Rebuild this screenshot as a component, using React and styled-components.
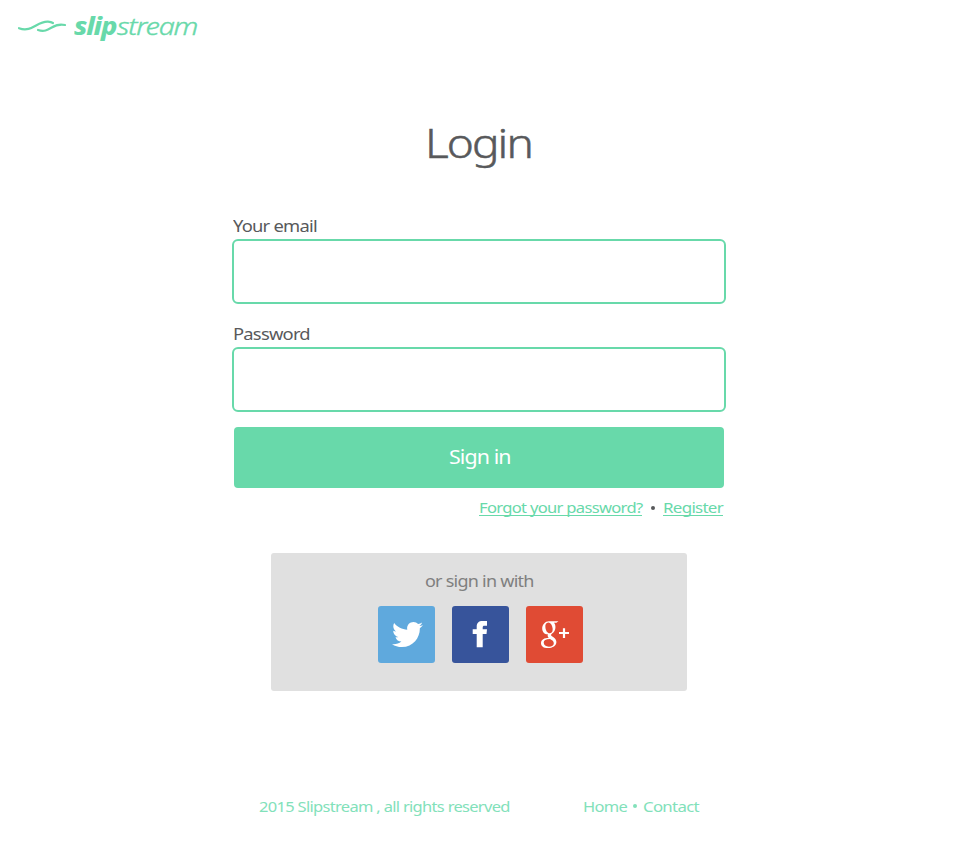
import React from "react";
import styled, { createGlobalStyle } from "styled-components";
import { FaTwitter } from "react-icons/fa";

const green = "#68d9aa";

const GlobalStyle = createGlobalStyle`
  * { box-sizing: border-box; }
  body { margin: 0; background: #fff; font-family: "Noto Sans", "Open Sans", sans-serif; color: #58595b; }
`;

const Page = styled.div`
  width: 960px;
  height: 850px;
  overflow: hidden;
  display: flex;
  flex-direction: column;
`;

const Header = styled.header`
  height: 54px;
  padding-left: 17px;
  display: flex;
  align-items: center;
  color: ${green};
`;

const Waves = styled.svg`
  width: 50px;
  height: 14px;
  flex: none;
`;

/* Wide, tightly set lettering: each text is stretched from one edge. */
const Stretch = styled.span`
  display: inline-block;
  white-space: nowrap;
  letter-spacing: -0.042em;
  transform: scaleX(${(p) => p.$x || 1});
  transform-origin: ${(p) => p.$from || "left"} center;
`;

const Brand = styled.div`
  display: flex;
  height: 34px;
  margin: -3px 0 0 7px;
  font-size: 24.5px;
  line-height: 34px;
  font-style: italic;
`;

const BrandPart = styled.span`
  width: ${(p) => p.$w}px;
  font-weight: ${(p) => p.$weight};
  -webkit-text-stroke: ${(p) => p.$stroke || 0}px ${green};
`;

const Title = styled.h1`
  margin: 61px 0 0;
  padding-right: 3px;
  height: 57px;
  text-align: center;
  font-size: 40px;
  line-height: 56px;
  font-weight: 300;
  -webkit-text-stroke: 0.5px #58595b;
`;

const Form = styled.form`
  width: 495px;
  margin: 43px 0 0 232px;
  display: flex;
  flex-direction: column;
`;

const Label = styled.label`
  height: 24px;
  padding-left: 1px;
  font-size: 17px;
  line-height: 22px;
`;

const Input = styled.input`
  width: 494px;
  height: 65px;
  margin-bottom: 19px;
  border: 2px solid ${green};
  border-radius: 6px;
  background: #fff;
  outline: none;
`;

const Submit = styled.button`
  width: 490px;
  height: 61px;
  margin: -4px 0 0 2px;
  border: 0;
  border-radius: 4px;
  background: ${green};
  color: #fff;
  font: 400 20px/56px "Noto Sans", sans-serif;
  padding: 0 0 2px 2px;
`;

const Links = styled.nav`
  width: 491px;
  height: 28px;
  margin: 6px 0 0;
  display: flex;
  justify-content: flex-end;
  align-items: flex-start;
  color: ${green};
  font-size: 15px;
`;

const Underlined = styled.a`
  width: ${(p) => p.$w}px;
  height: 22px;
  line-height: 26px;
  white-space: nowrap;
  border-bottom: 1px solid ${green};
`;

const Dot = styled.i`
  width: 4px;
  height: 4px;
  margin: ${(p) => p.$m};
  border-radius: 50%;
  background: ${(p) => p.$c};
`;

const Social = styled.section`
  width: 416px;
  height: 138px;
  margin: 31px 0 0 271px;
  padding-top: 17px;
  border-radius: 3px;
  background: #e0e0e0;
`;

const SocialTitle = styled.div`
  height: 22px;
  font-size: 17px;
  line-height: 22px;
  text-align: center;
  color: #7f7f7f;
`;

const Tiles = styled.div`
  display: flex;
  gap: 17.5px;
  margin: 14px 0 0 107px;
`;

const Tile = styled.a`
  width: 56.5px;
  height: 56.5px;
  border-radius: 3px;
  background: ${(p) => p.$c};
  color: #fff;
  display: flex;
`;

const Bird = styled(FaTwitter)`
  width: 31px;
  height: 31px;
  margin: 13px 0 0 14px;
`;

const Mark = styled.svg`
  width: 57px;
  height: 57px;
  flex: none;
`;

const Footer = styled.footer`
  display: flex;
  margin: 104px 0 0 259px;
  height: 22px;
  align-items: center;
  color: #82e1ba;
  font-size: 15px;
  line-height: 22px;
`;

const FooterItem = styled.span`
  width: ${(p) => p.$w}px;
  white-space: nowrap;
`;

export default function App() {
  return (
    <Page>
      <GlobalStyle />
      <Header>
        <Waves viewBox="0 0 50 14" fill="none" stroke="currentColor" strokeWidth="2.2" strokeLinecap="round">
          <path d="M2 8.2C15 13 20 1 31 1.6Q34 1.8 36 3" />
          <path d="M21 10C33 14 35 2 48 5" />
        </Waves>
        <Brand>
          <BrandPart $w={42.5} $weight={800}><Stretch $x={1.12}>slip</Stretch></BrandPart>
          <BrandPart $w={80} $weight={300} $stroke={0.4}><Stretch $x={1.18}>stream</Stretch></BrandPart>
        </Brand>
      </Header>
      <Title><Stretch $x={1.15} $from="center">Login</Stretch></Title>
      <Form>
        <Label><Stretch $x={1.08}>Your email</Stretch></Label>
        <Input type="email" />
        <Label><Stretch $x={1.08}>Password</Stretch></Label>
        <Input type="password" />
        <Submit type="button"><Stretch $x={1.07} $from="center">Sign in</Stretch></Submit>
        <Links>
          <Underlined $w={163}><Stretch $x={1.105}>Forgot your password?</Stretch></Underlined>
          <Dot $c="#58595b" $m="12px 8px 0 9px" />
          <Underlined $w={60}><Stretch $x={1.13}>Register</Stretch></Underlined>
        </Links>
      </Form>
      <Social>
        <SocialTitle><Stretch $x={1.06} $from="center">or sign in with</Stretch></SocialTitle>
        <Tiles>
          <Tile $c="#5fa9dd"><Bird /></Tile>
          <Tile $c="#37549b">
            <Mark viewBox="0 0 57 57" fill="currentColor">
              <path d="M24.7 41.3V28H20.7V23.3H24.7V20.5C24.7 17 26.7 15 30.5 15H35V19.8H32.4C31.2 19.8 30.7 20.3 30.7 21.5V23.3H35L34.5 28H30.7V41.3Z" />
            </Mark>
          </Tile>
          <Tile $c="#e04b34">
            <Mark viewBox="0 0 57 57" fill="currentColor" fillRule="evenodd">
              <path d="M23 15.2H32.5L30.4 16.8H28C30.1 19 30 24.2 27.4 26.4C25.4 28 24.7 28.4 25.2 29.5C26 30.9 30.4 32 30.4 36C30.4 39.6 26.8 42.1 21.8 42.1C17.6 42.1 15 40.2 15 37.2C15 33.6 18.4 32 22.8 31.8C21.6 30.6 21.4 29.6 21.9 28.3C18.5 28.4 16.2 25.8 16.2 22.4C16.2 18.5 19.2 15.2 23 15.2ZM22.3 16.5C20 16.6 19 18.8 19.4 21.4C19.8 24.8 21.6 27.4 23.9 27.2C26.2 27 27 24.8 26.6 22.2C26.1 18.9 24.6 16.4 22.3 16.5ZM24 33C19.8 33 17.7 34.3 17.7 36.6C17.7 39 19.8 40.7 22.9 40.7C26 40.7 27.8 39.4 27.8 37.2C27.8 35.3 26.4 34.2 24 33Z" />
              <path d="M36.9 22.3H39.1V25.9H43V28.1H39.1V32H36.9V28.1H33V25.9H36.9Z" />
            </Mark>
          </Tile>
        </Tiles>
      </Social>
      <Footer>
        <FooterItem $w={324}><Stretch $x={1.1}>2015 Slipstream , all rights reserved</Stretch></FooterItem>
        <FooterItem $w={44}><Stretch $x={1.1}>Home</Stretch></FooterItem>
        <Dot $c="#82e1ba" $m="0 6px" />
        <FooterItem><Stretch $x={1.12}>Contact</Stretch></FooterItem>
      </Footer>
    </Page>
  );
}
